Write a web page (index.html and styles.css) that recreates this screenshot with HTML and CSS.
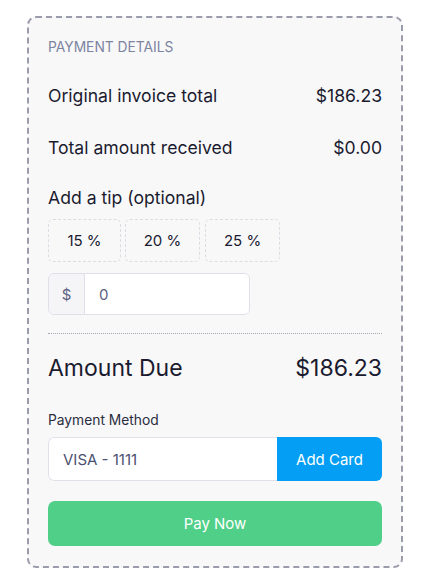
FILE: index.html
```html
<!DOCTYPE html>
<html lang="en">
<head>
<meta charset="utf-8">
<link rel="stylesheet" href="styles.css">
</head>
<body>
<div class="card">
  <div class="header">PAYMENT DETAILS</div>
  <div class="row"><span>Original invoice total</span><span>$186.23</span></div>
  <div class="row"><span>Total amount received</span><span>$0.00</span></div>
  <div class="tip-label">Add a tip (optional)</div>
  <div class="tips">
    <button class="tip">15 %</button>
    <button class="tip">20 %</button>
    <button class="tip">25 %</button>
  </div>
  <div class="tip-input">
    <span class="addon">$</span>
    <span class="field">0</span>
  </div>
  <div class="divider"></div>
  <div class="due"><span>Amount Due</span><span>$186.23</span></div>
  <div class="pm-label">Payment Method</div>
  <div class="pm-group">
    <span class="pm-field">VISA - 1111</span>
    <button class="add-card">Add Card</button>
  </div>
  <button class="pay">Pay Now</button>
</div>
</body>
</html>
```
FILE: styles.css
```css
* { box-sizing: border-box; }
html, body { margin: 0; padding: 0; background: #ffffff; }
body {
  font-family: Inter, "Noto Sans", sans-serif;
  color: #1b1b2f;
  padding: 16px 22px 0 27px;
}
.card {
  width: 376px;
  height: 552px;
  border: 2px dashed #9a9bab;
  border-radius: 9px;
  background: #f8f8f9;
  padding: 19px 19px 0 19px;
}
.header {
  font-size: 13.8px;
  line-height: 20px;
  color: #7d84a0;
}
.row {
  margin-top: 12px;
  height: 52px;
  display: flex;
  align-items: center;
  justify-content: space-between;
  font-size: 17.6px;
}
.row + .row { margin-top: 0; }
.tip-label {
  margin-top: 13px;
  font-size: 17.6px;
  line-height: 24px;
}
.tips {
  margin-top: 9px;
  display: flex;
  gap: 4px;
}
.tip {
  height: 43px;
  padding: 0;
  font-family: inherit;
  font-size: 15px;
  color: #1b1b2f;
  background: transparent;
  border: 1px dashed #dcdde3;
  border-radius: 5px;
}
.tip:nth-child(1) { width: 73px; }
.tip:nth-child(2) { width: 75px; }
.tip:nth-child(3) { width: 75px; margin-left: 1px; }
.tip-input {
  margin-top: 11px;
  width: 202px;
  height: 42px;
  display: flex;
  border: 1px solid #dfe0e8;
  border-radius: 6px;
  overflow: hidden;
  font-size: 15px;
}
.addon {
  width: 36px;
  display: flex;
  align-items: center;
  justify-content: center;
  background: #f5f5f7;
  border-right: 1px solid #dfe0e8;
  color: #5c6182;
}
.field {
  flex: 1;
  display: flex;
  align-items: center;
  padding-left: 14px;
  background: #ffffff;
  color: #5c6182;
}
.divider {
  margin-top: 18px;
  border-top: 1px dotted #a4a6b4;
}
.due {
  margin-top: 19px;
  display: flex;
  justify-content: space-between;
  font-size: 23px;
  line-height: 30px;
}
.pm-label {
  margin-top: 27px;
  font-size: 13.8px;
  line-height: 20px;
  color: #2a2d3e;
}
.pm-group {
  margin-top: 7px;
  height: 44px;
  display: flex;
  border-radius: 6px;
  overflow: hidden;
}
.pm-field {
  flex: 1;
  display: flex;
  align-items: center;
  padding-left: 14px;
  background: #ffffff;
  border: 1px solid #dfe0e8;
  border-right: none;
  border-radius: 6px 0 0 6px;
  font-size: 15px;
  color: #4c5070;
}
.add-card {
  width: 105px;
  border: none;
  background: #049ef4;
  color: #ffffff;
  font-family: inherit;
  font-size: 15px;
}
.pay {
  display: block;
  width: 100%;
  margin-top: 20px;
  height: 45px;
  border: none;
  border-radius: 7px;
  background: #50cf88;
  color: #ffffff;
  font-family: inherit;
  font-size: 15px;
}
```
